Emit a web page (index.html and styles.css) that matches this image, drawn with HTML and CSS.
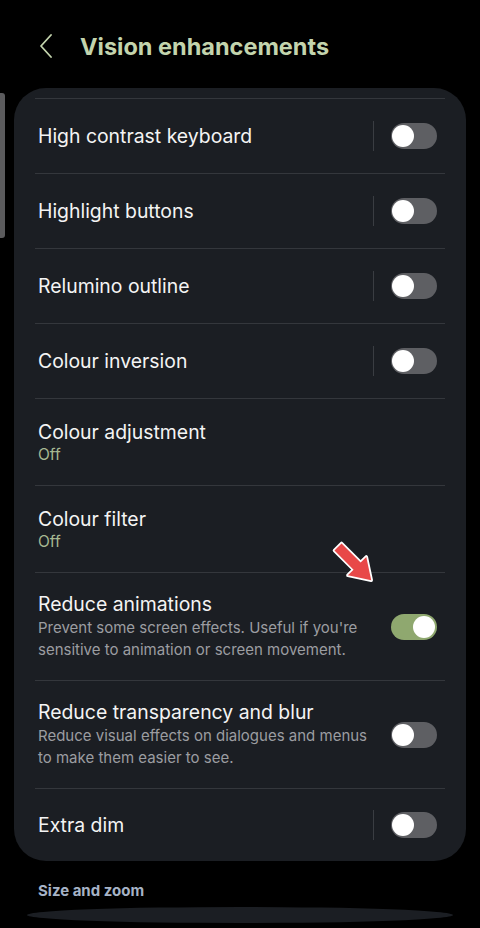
FILE: index.html
```html
<!DOCTYPE html>
<html>
<head>
<meta charset="utf-8">
<link rel="stylesheet" href="styles.css">
</head>
<body>
<div class="screen">
  <header class="appbar">
    <svg class="back" width="14" height="24" viewBox="0 0 14 24"><path d="M12 1 L2 12 L12 23" fill="none" stroke="#c3d4ad" stroke-width="1.8" stroke-linecap="round" stroke-linejoin="round"/></svg>
    <h1 class="title">Vision enhancements</h1>
  </header>
  <div class="scrollbar"></div>

  <section class="card">
    <div class="row single">
      <span class="label">High contrast keyboard</span>
      <span class="vdiv"></span><span class="toggle"></span>
    </div>
    <div class="row single">
      <span class="label">Highlight buttons</span>
      <span class="vdiv"></span><span class="toggle"></span>
    </div>
    <div class="row single">
      <span class="label">Relumino outline</span>
      <span class="vdiv"></span><span class="toggle"></span>
    </div>
    <div class="row single">
      <span class="label">Colour inversion</span>
      <span class="vdiv"></span><span class="toggle"></span>
    </div>
    <div class="row multi">
      <div class="text">
        <div class="label">Colour adjustment</div>
        <div class="status">Off</div>
      </div>
    </div>
    <div class="row multi">
      <div class="text">
        <div class="label">Colour filter</div>
        <div class="status">Off</div>
      </div>
    </div>
    <div class="row multi desc-row">
      <div class="text">
        <div class="label">Reduce animations</div>
        <div class="desc">Prevent some screen effects. Useful if you're sensitive to animation or screen movement.</div>
      </div>
      <span class="toggle on"></span>
    </div>
    <div class="row multi desc-row">
      <div class="text">
        <div class="label">Reduce transparency and blur</div>
        <div class="desc">Reduce visual effects on dialogues and menus to make them easier to see.</div>
      </div>
      <span class="toggle"></span>
    </div>
    <div class="row single last">
      <span class="label">Extra dim</span>
      <span class="vdiv"></span><span class="toggle"></span>
    </div>
    <svg class="arrow" width="60" height="60" viewBox="0 0 60 60"><g transform="translate(12,12) rotate(45)"><polygon points="0,-5 27,-5 27,-13 47,0 27,13 27,5 0,5" fill="#e84848" stroke="#ffffff" stroke-width="3.5" stroke-linejoin="round" paint-order="stroke"/></g></svg>
  </section>

  <div class="section-head">Size and zoom</div>
  <div class="next-card"></div>
</div>
</body>
</html>
```

FILE: styles.css
```css
* { box-sizing: border-box; }
html, body { margin: 0; padding: 0; background: #000; }
body { font-family: "Inter", "Roboto", sans-serif; color: #fff; }
.screen { position: relative; width: 480px; height: 928px; overflow: hidden; background: #000; }

.appbar { height: 88px; display: flex; align-items: center; padding: 4px 0 0 39px; }
.back { flex: none; margin-right: 27px; }
.title { margin: 0; font-size: 23.5px; font-weight: 700; color: #c3d4ad; letter-spacing: 0; }

.scrollbar { position: absolute; left: 0; top: 93px; width: 5px; height: 145px; background: #5b5b5d; border-radius: 0 3px 3px 0; }

.card { position: relative; margin: 0 14px; background: #1b1e23; border-radius: 32px; padding: 10px 21px 0; }
.row { display: flex; align-items: center; border-top: 1px solid #34373c; padding-left: 3px; padding-right: 8px; }
.row.single { height: 75px; }
.row.single.last { height: 73px; }
.label { font-size: 19.4px; line-height: 25px; color: #f4f4f4; flex: 1; }
.text { flex: 1; }
.row.multi { padding-top: 20px; padding-bottom: 20px; min-height: 87px; }
.row.desc-row { padding-top: 19px; padding-bottom: 19px; }
.status { font-size: 15.5px; line-height: 20px; color: #a7b892; }
.desc { font-size: 15px; line-height: 22px; color: #9b9da1; padding-right: 14px; }
.vdiv { width: 1px; height: 30px; background: #3a3d42; margin-right: 17px; }
.toggle { position: relative; flex: none; width: 46px; height: 26px; border-radius: 13px; background: #5e5f63; }
.toggle::after { content: ""; position: absolute; left: 1px; top: 2px; width: 22px; height: 22px; border-radius: 50%; background: #fff; }
.toggle.on { background: #8fa86f; }
.toggle.on::after { left: auto; right: 2px; }

.arrow { position: absolute; left: 312px; top: 447px; }

.section-head { padding: 20px 0 0 38px; font-size: 15px; font-weight: 700; color: #a6b3c6; height: 46px; }
.next-card { margin: 0 27px 0 27px; height: 16px; background: #1b1e23; border-radius: 50% / 8px; }
```
